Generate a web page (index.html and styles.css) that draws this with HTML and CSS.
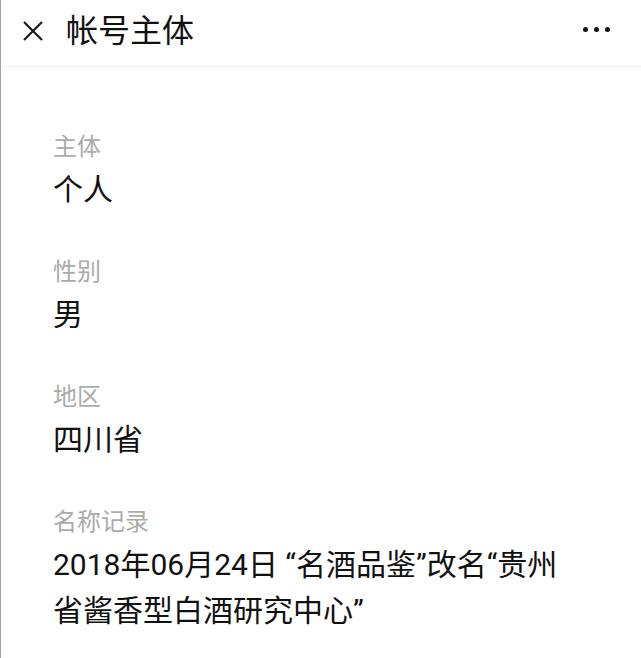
FILE: index.html
```html
<!DOCTYPE html>
<html>
<head>
    <meta charset="utf-8">
    <title>帐号主体</title>
    <link rel="stylesheet" href="styles.css">
</head>
<body>
    <div class="page">
        <div class="topbar">
            <div class="close">
                <svg width="22" height="22" viewBox="0 0 22 22">
                    <path d="M2 2 L20 20 M20 2 L2 20" stroke="#1a1a1a" stroke-width="2.2" fill="none" />
                </svg>
            </div>
            <div class="title">帐号主体</div>
            <div class="more">
                <span></span><span></span><span></span>
            </div>
        </div>

        <div class="content">
            <div class="item">
                <div class="label">主体</div>
                <div class="value">个人</div>
            </div>
            <div class="item">
                <div class="label">性别</div>
                <div class="value">男</div>
            </div>
            <div class="item">
                <div class="label">地区</div>
                <div class="value">四川省</div>
            </div>
            <div class="item">
                <div class="label">名称记录</div>
                <div class="value">2018年06月24日 “名酒品鉴”改名“贵州省酱香型白酒研究中心”</div>
            </div>
        </div>
    </div>
</body>
</html>
```

FILE: styles.css
```css
body {
    margin: 0;
    background-color: #fff;
    font-family: "Roboto", "Noto Sans CJK SC", sans-serif;
    color: #111;
}

.page {
    min-height: 658px;
    border-left: 1px solid #a5a5a5;
    box-sizing: border-box;
}

.topbar {
    display: flex;
    align-items: center;
    height: 66px;
    border-bottom: 1px solid #f0f0f0;
    padding: 0 21px;
}

.close {
    width: 22px;
    height: 22px;
    margin-top: -5px;
    display: flex;
}

.title {
    margin-left: 22px;
    font-size: 32px;
    line-height: 40px;
    margin-top: -4px;
    flex: 1;
}

.more {
    display: flex;
    gap: 6px;
    margin-right: 10px;
    margin-top: -8px;
}

.more span {
    width: 5px;
    height: 5px;
    border-radius: 50%;
    background-color: #111;
}

.content {
    padding: 60px 70px 0 52px;
}

.item {
    margin-bottom: 39px;
}

.label {
    font-size: 24px;
    line-height: 40px;
    color: #ababab;
}

.value {
    font-size: 30px;
    line-height: 46px;
    color: #111;
}
```
